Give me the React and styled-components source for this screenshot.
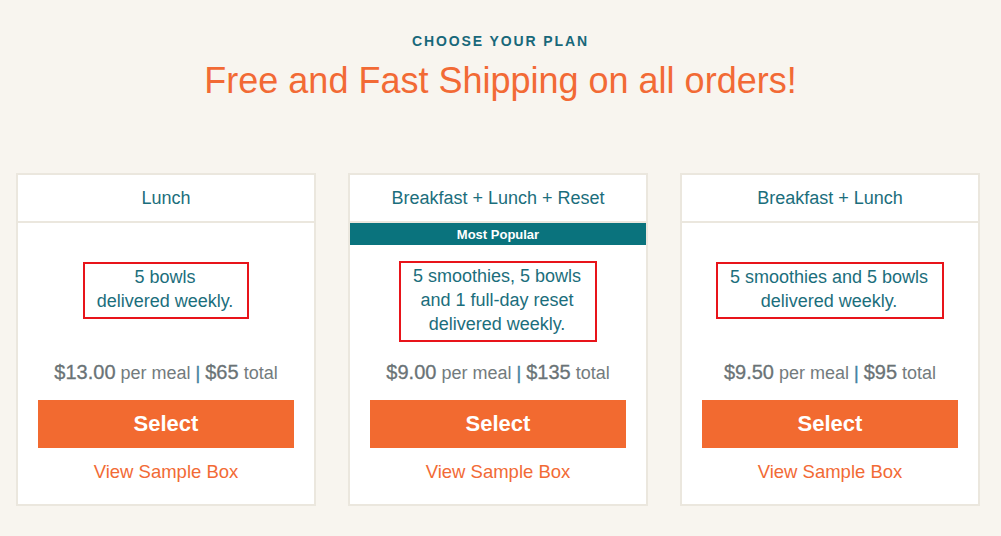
import React from "react";
import styled, { createGlobalStyle } from "styled-components";

const plans = [
  {
    name: "Lunch",
    lines: ["5 bowls", "delivered weekly."],
    perMeal: "$13.00",
    total: "$65",
  },
  {
    name: "Breakfast + Lunch + Reset",
    popular: true,
    lines: ["5 smoothies, 5 bowls", "and 1 full-day reset", "delivered weekly."],
    perMeal: "$9.00",
    total: "$135",
  },
  {
    name: "Breakfast + Lunch",
    lines: ["5 smoothies and 5 bowls", "delivered weekly."],
    perMeal: "$9.50",
    total: "$95",
  },
];

const GlobalStyle = createGlobalStyle`
  body {
    margin: 0;
    background: #f8f5ef;
    font-family: "Liberation Sans", Arial, sans-serif;
  }
`;

const App = () => {
  return (
    <Page>
      <GlobalStyle />
      <Header>
        <Eyebrow>CHOOSE YOUR PLAN</Eyebrow>
        <Title>Free and Fast Shipping on all orders!</Title>
      </Header>
      <Cards>
        {plans.map((plan) => (
          <Card key={plan.name}>
            <CardHead>{plan.name}</CardHead>
            <CardBody>
              {plan.popular && <Badge>Most Popular</Badge>}
              <DescArea>
                <Desc>
                  {plan.lines.map((line) => (
                    <div key={line}>{line}</div>
                  ))}
                </Desc>
              </DescArea>
            </CardBody>
            <Price>
              <Amount>{plan.perMeal}</Amount> per meal <Divider>|</Divider>{" "}
              <Amount>{plan.total}</Amount> total
            </Price>
            <SelectButton>Select</SelectButton>
            <SampleLink>View Sample Box</SampleLink>
          </Card>
        ))}
      </Cards>
    </Page>
  );
};

export default App;

const Page = styled.div`
  width: 1001px;
  height: 536px;
  overflow: hidden;
`;

const Header = styled.div`
  display: flex;
  flex-direction: column;
  align-items: center;
  padding-top: 34px;
`;

const Eyebrow = styled.div`
  font-size: 14px;
  font-weight: 700;
  letter-spacing: 1.9px;
  color: #18687a;
  line-height: 15px;
`;

const Title = styled.h1`
  margin: 11px 0 0;
  font-size: 36px;
  font-weight: 400;
  line-height: 42px;
  color: #f26a35;
`;

const Cards = styled.div`
  display: flex;
  gap: 32px;
  margin-top: 71px;
  padding-left: 16px;
`;

const Card = styled.div`
  width: 300px;
  height: 333px;
  box-sizing: border-box;
  background: #fff;
  border: 2px solid #ebe7de;
  display: flex;
  flex-direction: column;
  align-items: center;
`;

const CardHead = styled.div`
  align-self: stretch;
  height: 48px;
  box-sizing: border-box;
  border-bottom: 2px solid #ebe7de;
  display: flex;
  align-items: center;
  justify-content: center;
  font-size: 18px;
  color: #1b6e7c;
`;

const CardBody = styled.div`
  align-self: stretch;
  height: 134px;
  display: flex;
  flex-direction: column;
`;

const Badge = styled.div`
  height: 22px;
  background: #0a737d;
  color: #fff;
  font-size: 13px;
  font-weight: 700;
  display: flex;
  align-items: center;
  justify-content: center;
`;

const DescArea = styled.div`
  flex: 1;
  display: flex;
  align-items: center;
  justify-content: center;
`;

const Desc = styled.div`
  border: 2px solid #e8141a;
  padding: 1px 14px 4px 12px;
  font-size: 18px;
  line-height: 24px;
  color: #1b6e7c;
  text-align: center;
`;

const Price = styled.div`
  margin-top: 4px;
  font-size: 18px;
  line-height: 22px;
  color: #737b7d;
`;

const Amount = styled.span`
  font-size: 20px;
  color: #6a7376;
  -webkit-text-stroke: 0.3px #6a7376;
`;

const Divider = styled.span`
  color: #3f82a0;
  -webkit-text-stroke: 0.4px #3f82a0;
`;

const SelectButton = styled.button`
  margin-top: 16px;
  width: 256px;
  height: 48px;
  border: none;
  background: #f26a30;
  color: #fff;
  font-family: inherit;
  font-size: 22px;
  font-weight: 700;
  cursor: pointer;
`;

const SampleLink = styled.a`
  margin-top: 13px;
  font-size: 18.5px;
  line-height: 22px;
  color: #f26a35;
  cursor: pointer;
`;
